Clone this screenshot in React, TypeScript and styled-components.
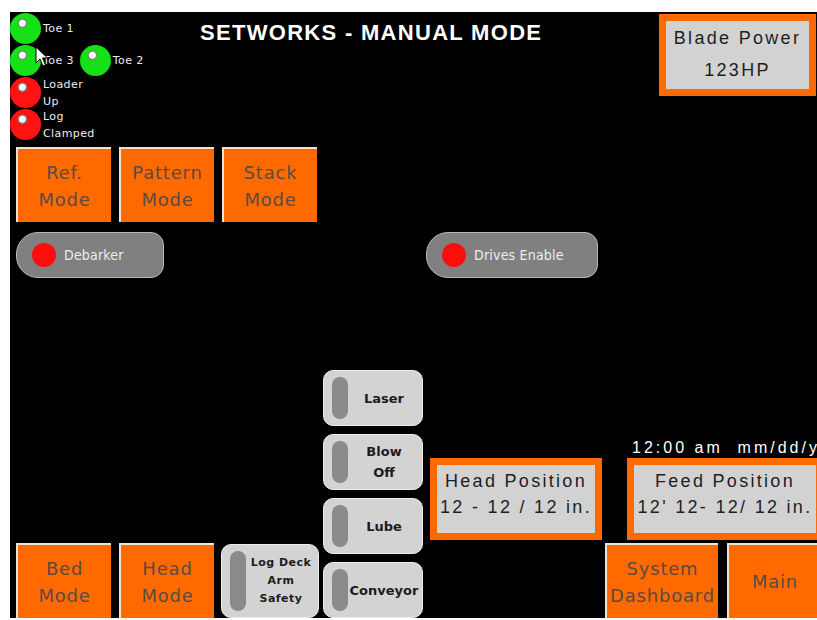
import styled, { createGlobalStyle } from 'styled-components';

const GlobalStyle = createGlobalStyle`
  body {
    margin: 0;
    background: #fff;
  }
  #root {
    padding: 12px 0 2px 10px;
  }
`;

const Screen = styled.div`
  position: relative;
  width: 807px;
  height: 606px;
  background: #000;
  overflow: hidden;
  display: flex;
  flex-direction: column;
  font-family: 'DejaVu Sans', Verdana, sans-serif;
`;

const Header = styled.header`
  display: flex;
  align-items: flex-start;
  height: 135px;
  flex-shrink: 0;
`;

const Lamps = styled.div`
  width: 190px;
  padding-top: 1px;
  display: flex;
  flex-direction: column;
  gap: 1px;
  flex-shrink: 0;
`;

const LampRow = styled.div`
  display: flex;
  align-items: center;
  height: 31px;
`;

const Lamp = styled.span<{ $on: boolean; $gap?: number }>`
  width: 31px;
  height: 31px;
  margin-left: ${(p) => p.$gap ?? 0}px;
  border-radius: 50%;
  flex-shrink: 0;
  background: radial-gradient(
    circle at 40% 33%,
    #fff 0 3px,
    rgba(255, 255, 255, 0.5) 4px,
    ${(p) => (p.$on ? '#16e016' : '#ff1212')} 5.5px
  );
`;

const LampLabel = styled.span`
  margin-left: 2px;
  color: #eee;
  font-size: 11px;
  line-height: 17px;
  letter-spacing: 0.4px;
  white-space: nowrap;
`;

const Title = styled.h1`
  margin: 10px 0 0;
  color: #fff;
  font: bold 22px/22px 'Liberation Sans', Arial, sans-serif;
  letter-spacing: 1.3px;
  white-space: nowrap;
`;

const Readout = styled.div<{ $w: number; $lh: number }>`
  box-sizing: border-box;
  width: ${(p) => p.$w}px;
  height: 82px;
  flex-shrink: 0;
  border: 7px solid #ff6a00;
  background: #d2d2d2;
  display: flex;
  flex-direction: column;
  align-items: center;
  justify-content: center;
  color: #1e1e1e;
  font: 18px/${(p) => p.$lh}px 'Liberation Sans', Arial, sans-serif;
  letter-spacing: 2.3px;
  white-space: nowrap;
`;

const BladePower = styled(Readout)`
  margin: 2px 1px 0 auto;
  padding-bottom: 2px;
`;

const HeadReadout = styled(Readout)`
  margin: 0 0 78px 7px;
  padding-bottom: 11px;
`;

const FeedReadout = styled(Readout)`
  margin-left: 22px;
  padding-bottom: 11px;
`;

const ModeRow = styled.div`
  display: flex;
  gap: 8px;
  padding-left: 6px;
  flex-shrink: 0;
`;

const OrangeButton = styled.button<{ $w?: number }>`
  box-sizing: border-box;
  width: ${(p) => p.$w ?? 95}px;
  height: 75px;
  flex-shrink: 0;
  padding: 0;
  background: #ff6a00;
  border: none;
  border-top: 2px solid #f2e2d6;
  border-left: 2px solid #f2e2d6;
  color: #5a4b43;
  font: 18px/27px 'DejaVu Sans', Verdana, sans-serif;
  letter-spacing: 0.8px;
  white-space: nowrap;
`;

const Line = styled.span`
  display: block;
`;

const PillRow = styled.div`
  display: grid;
  grid-template-columns: 148px 172px;
  column-gap: 262px;
  margin-top: 10px;
  padding-left: 6px;
  flex-shrink: 0;
`;

const Pill = styled.button`
  box-sizing: border-box;
  height: 46px;
  display: flex;
  align-items: center;
  gap: 8px;
  padding: 0 0 0 15px;
  background: #808080;
  border: 1px solid #b8b8b8;
  border-radius: 22px 13px 13px 22px;
  color: #eee;
  font: 14px 'DejaVu Sans Condensed', 'DejaVu Sans', sans-serif;
  letter-spacing: 0.2px;
`;

const RedDot = styled.span`
  width: 24px;
  height: 24px;
  border-radius: 50%;
  background: #ff0d0d;
  flex-shrink: 0;
`;

const Deck = styled.div`
  flex: 1;
  display: flex;
  align-items: flex-end;
  padding-left: 6px;
`;

const Toggle = styled.button<{ $w?: number; $h?: number; $small?: boolean }>`
  box-sizing: border-box;
  width: ${(p) => p.$w ?? 100}px;
  height: ${(p) => p.$h ?? 56}px;
  flex-shrink: 0;
  display: flex;
  align-items: stretch;
  padding: 6px 2px 6px 8px;
  background: #d3d3d3;
  border: 1px solid #ececec;
  border-radius: 10px;
  color: #1c1c1c;
  font: bold ${(p) => (p.$small ? '11px/18px' : '13px/21px')} 'DejaVu Sans', Tahoma, sans-serif;
  letter-spacing: ${(p) => (p.$small ? 0.5 : 0)}px;
`;

const LogDeckToggle = styled(Toggle)`
  margin-left: 7px;
`;

const Knob = styled.span`
  width: 16px;
  border-radius: 8px;
  background: #8a8a8a;
  flex-shrink: 0;
`;

const ToggleText = styled.span`
  flex: 1;
  display: flex;
  flex-direction: column;
  justify-content: center;
  align-items: center;
  white-space: nowrap;
`;

const ToggleStack = styled.div`
  margin-left: 4px;
  display: flex;
  flex-direction: column;
  gap: 8px;
  flex-shrink: 0;
`;

const RightCol = styled.div`
  margin-left: 3px;
  display: flex;
  flex-direction: column;
  flex-shrink: 0;
`;

const Clock = styled.div`
  margin: 0 0 1px 27px;
  color: #fff;
  font: 16px/18px 'Liberation Sans', Arial, sans-serif;
  letter-spacing: 3px;
  white-space: pre;
`;

const ButtonPair = styled.div<{ $gap: number }>`
  display: flex;
  gap: ${(p) => p.$gap}px;
  flex-shrink: 0;
`;

const NavRow = styled(ButtonPair)`
  margin-top: 3px;
`;

const Cursor = styled.svg`
  position: absolute;
  left: 25px;
  top: 34px;
`;

const toggles = ['Laser', 'Blow\nOff', 'Lube', 'Conveyor'];

const lines = (text: string) =>
  text.split('\n').map((t) => <Line key={t}>{t}</Line>);

export default function App() {
  return (
    <>
      <GlobalStyle />
      <Screen>
        <Header>
          <Lamps>
            <LampRow>
              <Lamp $on />
              <LampLabel>Toe 1</LampLabel>
            </LampRow>
            <LampRow>
              <Lamp $on />
              <LampLabel>Toe 3</LampLabel>
              <Lamp $on $gap={6} />
              <LampLabel>Toe 2</LampLabel>
            </LampRow>
            <LampRow>
              <Lamp $on={false} />
              <LampLabel>{lines('Loader\nUp')}</LampLabel>
            </LampRow>
            <LampRow>
              <Lamp $on={false} />
              <LampLabel>{lines('Log\nClamped')}</LampLabel>
            </LampRow>
          </Lamps>
          <Title>SETWORKS - MANUAL MODE</Title>
          <BladePower $w={157} $lh={32}>
            <span>Blade Power</span>
            <span>123HP</span>
          </BladePower>
        </Header>

        <ModeRow>
          <OrangeButton>{lines('Ref.\nMode')}</OrangeButton>
          <OrangeButton>{lines('Pattern\nMode')}</OrangeButton>
          <OrangeButton>{lines('Stack\nMode')}</OrangeButton>
        </ModeRow>

        <PillRow>
          <Pill>
            <RedDot />
            Debarker
          </Pill>
          <Pill>
            <RedDot />
            Drives Enable
          </Pill>
        </PillRow>

        <Deck>
          <ButtonPair $gap={8}>
            <OrangeButton>{lines('Bed\nMode')}</OrangeButton>
            <OrangeButton>{lines('Head\nMode')}</OrangeButton>
          </ButtonPair>
          <LogDeckToggle $w={98} $h={74} $small>
            <Knob />
            <ToggleText>{lines('Log Deck\nArm\nSafety')}</ToggleText>
          </LogDeckToggle>
          <ToggleStack>
            {toggles.map((t) => (
              <Toggle key={t}>
                <Knob />
                <ToggleText>{lines(t)}</ToggleText>
              </Toggle>
            ))}
          </ToggleStack>
          <HeadReadout $w={172} $lh={26}>
            <span>Head Position</span>
            <span>12 - 12 / 12 in.</span>
          </HeadReadout>
          <RightCol>
            <Clock>12:00 am  mm/dd/yy</Clock>
            <FeedReadout $w={196} $lh={26}>
              <span>Feed Position</span>
              <span>12' 12- 12/ 12 in.</span>
            </FeedReadout>
            <NavRow $gap={9}>
              <OrangeButton $w={113}>{lines('System\nDashboard')}</OrangeButton>
              <OrangeButton $w={94}>Main</OrangeButton>
            </NavRow>
          </RightCol>
        </Deck>

        <Cursor width="14" height="22" viewBox="0 0 14 22">
          <path
            d="M1 1 L1 17 L5 13 L8 20 L10.5 19 L7.5 12 L12.5 12 Z"
            fill="#fff"
            stroke="#000"
            strokeWidth="1"
            strokeLinejoin="round"
          />
        </Cursor>
      </Screen>
    </>
  );
}
